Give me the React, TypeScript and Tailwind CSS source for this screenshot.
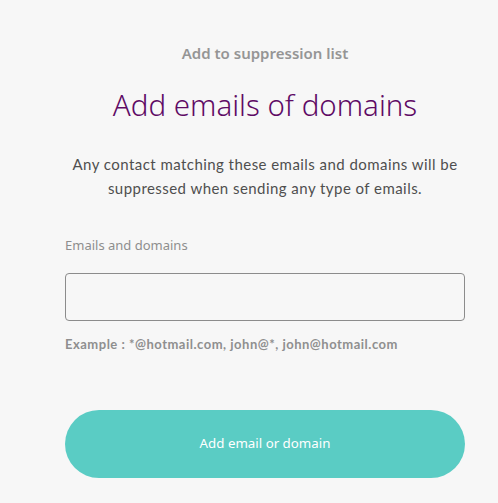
export default function App() {
  return (
    <div className="min-h-screen bg-[#f7f7f7] flex">
      <div className="ml-[65px] w-[400px] flex flex-col pt-[42px]">
        <p className="text-center text-[15px] leading-[22px] font-semibold text-[#959595] font-['Noto_Sans',sans-serif]">
          Add to suppression list
        </p>
        <h1 className="mt-[23px] text-center text-[29.5px] leading-[36px] text-[#5f0b65] font-['Noto_Sans',sans-serif] font-light">
          Add emails of domains
        </h1>
        <p className="mt-[29px] -mx-2 text-center text-[15px] leading-[24px] tracking-[0.45px] text-[#4f4f4f] font-['Lato',sans-serif]">
          Any contact matching these emails and domains will be suppressed when sending any type of emails.
        </p>
        <label className="mt-[35px] text-[13px] leading-[20px] text-[#8e8e8e] font-['Noto_Sans',sans-serif]">
          Emails and domains
        </label>
        <input
          type="text"
          className="mt-[18px] h-[48px] w-full rounded-[4px] border border-[#8c8c8c] bg-[#f7f7f7] px-3 text-[14px] outline-none"
        />
        <p className="mt-[14px] text-[13px] leading-[18px] font-bold tracking-[0.5px] text-[#8f8f8f] font-['Lato',sans-serif]">
          Example : *@hotmail.com, john@*, john@hotmail.com
        </p>
        <button className="mt-[57px] h-[68px] w-full rounded-full bg-[#5accc4] text-white text-[13.3px] font-['Noto_Sans',sans-serif]">
          Add email or domain
        </button>
      </div>
    </div>
  );
}
